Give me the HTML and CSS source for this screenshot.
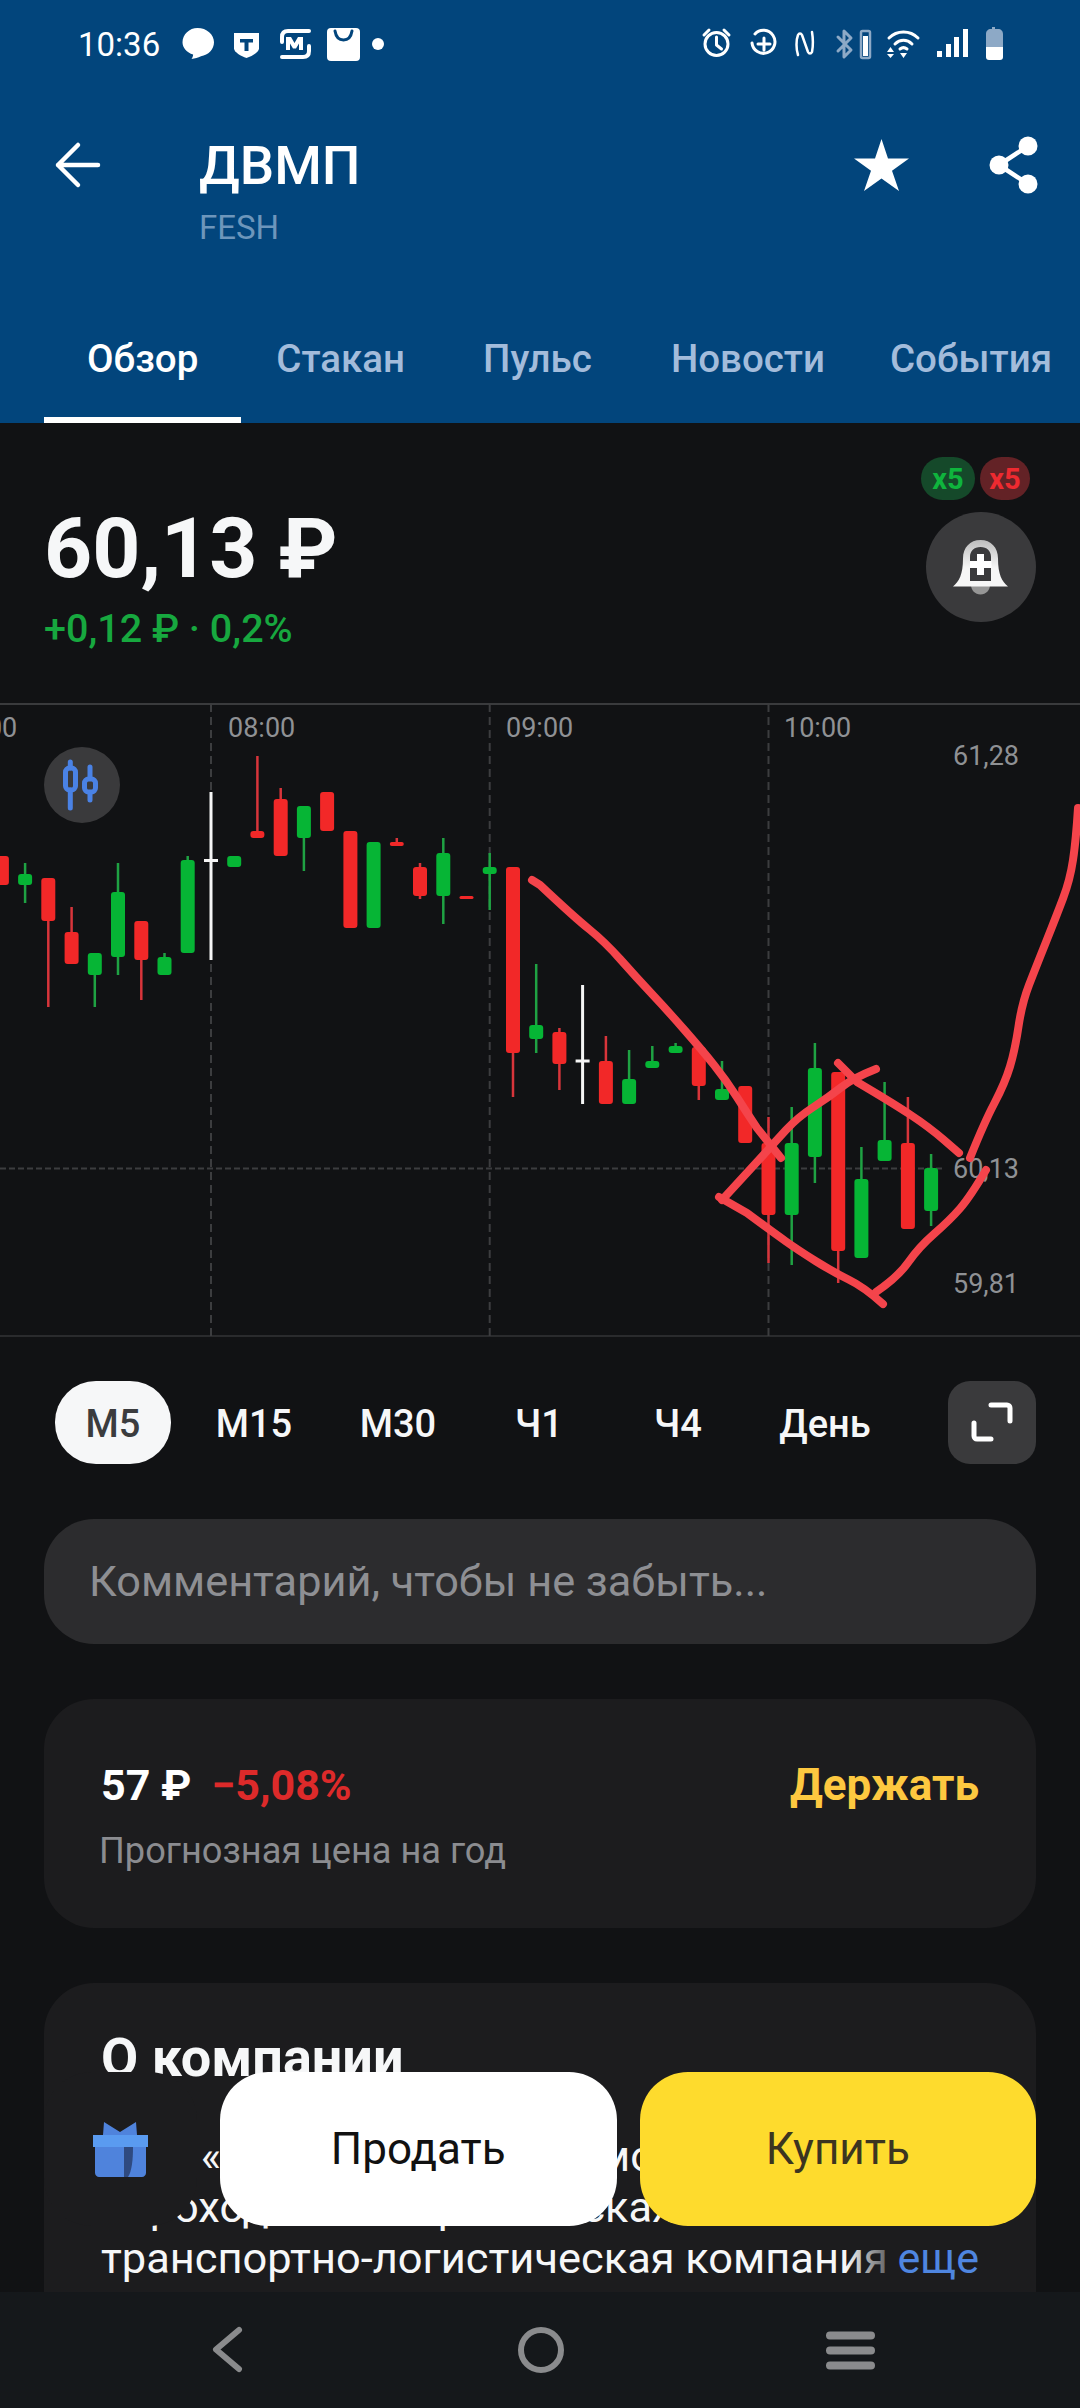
FILE: index.html
```html
<!DOCTYPE html>
<html lang="ru">
<head>
  <meta charset="UTF-8">
  <meta name="viewport" content="width=device-width, initial-scale=1.0">
  <title>ДВМП</title>
  <link rel="stylesheet" href="styles.css">
</head>
<body>
  <div id="screen">
    <header class="top">
      <div class="status">
        <div class="status-group">
          <span class="clock">10:36</span>
          <svg width="42" height="40" viewBox="173 24 42 40"><path class="fill" d="M198.500 28c9.100 0 16.500 6.300 16.500 14.300 0 7-5.600 12.800-13 14-3 1.300-6 2.200-9.500 2.700 1-1.300 1.600-2.800 1.600-4.400-6.300-2-10.600-6.700-10.600-12.300 0-8 6.900-14.300 15-14.300z"/></svg>
          <svg width="33" height="40" viewBox="227 24 33 40"><path class="fill" d="M235 33h25v15.500c0 3.500-7 7.700-12.500 9.500-5.500-1.800-12.500-6-12.500-9.500z"/><path class="cut" d="M241 39h13v3.500h-4.500V51h-4v-8.500H241z"/></svg>
          <svg width="40" height="40" viewBox="272 24 40 40"><path class="line thick" d="M283 42v-5c0-4 2-6 6-6h21M310 46v5c0 4-2 6-6 6h-21"/><path class="fill" d="M287 37h5l3.500 6 3.500-6h5v13h-4v-6.500l-3 5h-3l-3-5V50h-4z"/></svg>
          <svg width="37" height="40" viewBox="324 24 37 40"><rect class="fill" x="328" y="28" width="33" height="33" rx="4"/><path class="blue-line" d="M336 31c1 6 4 9 8.500 9s7.500-3 8.500-9"/></svg>
          <svg width="12" height="40" viewBox="373 24 12 40"><circle class="fill" cx="379" cy="44" r="6"/></svg>
        </div>
        <div class="status-group">
          <svg width="29" height="40" viewBox="702 24 29 40"><circle class="line" cx="716.500" cy="44" r="11.500"/><path class="line" d="M716.500 37v8l5 4M704 35l5-5M729 35l-5-5"/></svg>
          <svg width="30" height="40" viewBox="747 24 30 40"><path class="line" d="M755 34a11.500 11.500 0 1 1-3 9M764 38v12M758 44h12"/></svg>
          <svg width="20" height="40" viewBox="793 24 20 40"><path class="line thin" d="M798 55c-2-6-2-15 0-20 1-2 3-2 4 0l6 17c1 2 3 2 4 0 1-5 1-14 0-20"/></svg>
          <svg width="42" height="40" viewBox="829 24 42 40"><path class="line dim" d="M838 37l13 13-7 7V31l7 7-13 13"/><rect class="line thin dim" x="861" y="31" width="9" height="27" rx="1.500"/><rect class="fill" x="863" y="36" width="5" height="20"/></svg>
          <svg width="33" height="40" viewBox="887 24 33 40"><path class="line" d="M889 38c8-8 21-8 29 0M895 44c5-5 12-5 17 0M900 49c2.500-2 4.500-2 7 0"/><path class="fill" d="M887 52h7l-3.500-5zM887 54h7l-3.500 4zM900 53h7l-3.500 5z"/></svg>
          <svg width="32" height="40" viewBox="936 24 32 40"><path class="fill" d="M937 51h5v6h-5zM946 44h5v13h-5zM954 37h5v20h-5zM963 29h5v28h-5z"/></svg>
          <svg width="19" height="40" viewBox="984 24 19 40"><path class="dim-fill" d="M992 27h3v2h3c3 0 5 2 5 5v13h-17V34c0-3 2-5 5-5h1z"/><path class="fill" d="M986 47h17v10c0 2-1 3-3 3h-11c-2 0-3-1-3-3z"/></svg>
        </div>
      </div>
      <div class="app-bar">
        <svg class="back" width="47" height="45" viewBox="54 142 47 45"><path class="line arrow" d="M98 165H58M78 145l-20 20 20 20"/></svg>
        <div class="title-block">
          <h1>ДВМП</h1>
          <p>FESH</p>
        </div>
        <div class="actions">
          <svg width="55" height="52" viewBox="854 139 55 52"><path class="fill" d="M881.500 139l6.500 19.500h21l-17 12.200 7 20.300-17.500-12.500-17.500 12.500 7-20.300-17-12.200h21z"/></svg>
          <svg width="50" height="58" viewBox="989 136 50 58"><path class="line arrow" d="M1028 146l-29 19 29 19"/><circle class="fill" cx="1028" cy="146" r="9.500"/><circle class="fill" cx="999" cy="165" r="9.500"/><circle class="fill" cx="1028" cy="184" r="9.500"/></svg>
        </div>
      </div>
      <nav class="tabs">
        <a class="tab active">Обзор</a>
        <a class="tab">Стакан</a>
        <a class="tab">Пульс</a>
        <a class="tab">Новости</a>
        <a class="tab">События</a>
      </nav>
    </header>

    <section class="quote">
      <div>
        <div class="price">60,13 ₽</div>
        <div class="change">+0,12 ₽ · 0,2%</div>
      </div>
      <div class="quote-side">
        <div class="badges">
          <span class="badge long">x5</span>
          <span class="badge short">x5</span>
        </div>
        <button class="bell">
          <svg width="56" height="55" viewBox="953 541 56 55">
            <defs>
              <linearGradient id="bell-shade" x1="0" y1="0" x2="0" y2="1">
                <stop class="bell-top" offset="0"/>
                <stop class="bell-bottom" offset="0.6"/>
              </linearGradient>
            </defs>
            <path class="clapper" d="M971 586h19c0 5-4 9.500-9.500 9.500S971 591 971 586z"/>
            <path class="bell-body" fill-rule="evenodd" d="M953 587.500c6-5 10-12 10-28 0-11 7-18.500 17.500-18.500s17.500 7.500 17.500 18.500c0 16 4 23 10 28zM970 582h21v-24c0-6-4-10-10.500-10S970 552 970 558z"/>
            <path class="fill" d="M977 555h7v7h7.500v7H984v7h-7v-7h-7v-7h7z"/>
          </svg>
        </button>
      </div>
    </section>

    <section class="chart">
      <svg class="plot" width="1080" height="634" viewBox="0 703 1080 634">
        <path class="grid vertical" d="M211 704V1337M489.700 704V1337M768.500 704V1337"/>
        <path class="grid" d="M0 1168.500H942"/>
        <text class="axis" x="-50" y="737">07:00</text>
        <text class="axis" x="228" y="737">08:00</text>
        <text class="axis" x="506" y="737">09:00</text>
        <text class="axis" x="784" y="737">10:00</text>
        <text class="axis" x="953" y="765">61,28</text>
        <text class="axis" x="953" y="1178">60,13</text>
        <text class="axis" x="953" y="1293">59,81</text>

        <path class="wick red" d="M48.300 921V1007M71.600 907V932M141.300 960V1000M257.400 756V831M280.700 788V799M396.800 838V842M420 863V899M513 1053V1097M559.400 1028V1090M605.900 1036V1061M698.800 1086V1100M768.500 1117V1263M838.200 1251V1283M907.900 1097V1143"/>
        <path class="wick green" d="M25.100 863V903M94.800 975V1007M118 863V975M164.500 953V957M187.700 856V860M303.900 838V871M443.300 838V924M489.700 853V910M536.200 964V1053M629.100 1050V1079M652.300 1046V1061M675.600 1043V1046M722 1061V1089M791.700 1107V1265M814.900 1043V1183M861.400 1147V1179M884.600 1082V1140M931.100 1154V1226"/>
        <path class="wick white" d="M211 792V960M204 860.500H218M582.600 985V1104M575.600 1061H589.600"/>
        <g class="bodies red">
          <rect x="-5.100" y="856" width="14" height="29" rx="3"/>
          <rect x="41.300" y="878" width="14" height="43" rx="3"/>
          <rect x="64.600" y="932" width="14" height="32" rx="3"/>
          <rect x="134.300" y="921" width="14" height="39" rx="3"/>
          <rect x="250.400" y="831" width="14" height="7" rx="3"/>
          <rect x="273.700" y="799" width="14" height="57" rx="3"/>
          <rect x="320.100" y="792" width="14" height="39" rx="3"/>
          <rect x="343.400" y="831" width="14" height="97" rx="3"/>
          <rect x="389.800" y="842" width="14" height="4" rx="2"/>
          <rect x="413" y="867" width="14" height="29" rx="3"/>
          <rect x="459.500" y="896" width="14" height="3" rx="1.500"/>
          <rect x="506" y="867" width="14" height="186" rx="3"/>
          <rect x="552.400" y="1032" width="14" height="32" rx="3"/>
          <rect x="598.900" y="1061" width="14" height="43" rx="3"/>
          <rect x="691.800" y="1047" width="14" height="39" rx="3"/>
          <rect x="738.200" y="1086" width="14" height="57" rx="3"/>
          <rect x="761.500" y="1143" width="14" height="72" rx="3"/>
          <rect x="831.200" y="1072" width="14" height="179" rx="3"/>
          <rect x="900.900" y="1143" width="14" height="86" rx="3"/>
        </g>
        <g class="bodies green">
          <rect x="18.100" y="874" width="14" height="11" rx="3"/>
          <rect x="87.800" y="953" width="14" height="22" rx="3"/>
          <rect x="111" y="892" width="14" height="65" rx="3"/>
          <rect x="157.500" y="957" width="14" height="18" rx="3"/>
          <rect x="180.700" y="860" width="14" height="93" rx="3"/>
          <rect x="227.200" y="856" width="14" height="11" rx="3"/>
          <rect x="296.900" y="806" width="14" height="32" rx="3"/>
          <rect x="366.600" y="842" width="14" height="86" rx="3"/>
          <rect x="436.300" y="853" width="14" height="43" rx="3"/>
          <rect x="482.700" y="867" width="14" height="7" rx="3"/>
          <rect x="529.200" y="1025" width="14" height="14" rx="3"/>
          <rect x="622.100" y="1079" width="14" height="25" rx="3"/>
          <rect x="645.300" y="1061" width="14" height="7" rx="3"/>
          <rect x="668.600" y="1046" width="14" height="7" rx="3"/>
          <rect x="715" y="1089" width="14" height="11" rx="3"/>
          <rect x="784.700" y="1143" width="14" height="72" rx="3"/>
          <rect x="807.900" y="1068" width="14" height="89" rx="3"/>
          <rect x="854.400" y="1179" width="14" height="79" rx="3"/>
          <rect x="877.600" y="1140" width="14" height="21" rx="3"/>
          <rect x="924.100" y="1168" width="14" height="43" rx="3"/>
        </g>

        <g class="drawing">
          <path d="M532 880L540 885Q574 917 589.500 929.500Q605 942 620.500 959.500Q636 977 651.500 993.500Q667 1010 684.500 1030Q702 1050 714 1065Q726 1080 736.500 1096.500Q747 1113 757 1128L781 1158"/>
          <path d="M876 1069Q853 1078 841 1087.500Q829 1097 813.500 1107Q798 1117 786 1130Q774 1143 762 1156.500L722 1200"/>
          <path d="M719 1197L747 1213Q774 1233 786 1241.500Q798 1250 815.500 1261Q833 1272 848.500 1279.500Q864 1287 883 1304"/>
          <path d="M838 1063L857 1082Q891 1102 910 1114.500Q929 1127 944 1140L959 1153"/>
          <path d="M876 1292Q898 1277 908.500 1262Q919 1247 934.500 1233.500Q950 1220 960 1208.500Q970 1197 986 1170"/>
          <path d="M970 1158Q984 1123 994.500 1103Q1005 1083 1010 1066.500Q1015 1050 1018.500 1026.500Q1022 1003 1029 985Q1036 967 1046 942Q1056 917 1063 898.500Q1070 880 1073 860Q1076 840 1078 808"/>
        </g>
      </svg>
      <div class="chart-btn">
        <svg width="44" height="48" viewBox="63 763 44 48"><path class="blue-line" d="M73.300 764V770M73.300 792V810M93 769V780M93 795V802"/><rect class="blue-line" x="68.500" y="770" width="10" height="22" rx="4"/><rect class="blue-line" x="87.500" y="781" width="11" height="13" rx="4"/></svg>
      </div>
    </section>

    <div class="frames">
      <div class="frame-list">
        <span class="frame selected">М5</span>
        <span class="frame">М15</span>
        <span class="frame">М30</span>
        <span class="frame">Ч1</span>
        <span class="frame">Ч4</span>
        <span class="frame">День</span>
      </div>
      <button class="expand">
        <svg width="42" height="42" viewBox="972 1403 42 42"><path class="line expand-line" d="M992 1406h16a3 3 0 0 1 3 3v13M975 1424v13a3 3 0 0 0 3 3h14"/></svg>
      </button>
    </div>

    <div class="comment">Комментарий, чтобы не забыть...</div>

    <section class="card forecast">
      <div class="forecast-main">
        <div><b class="target">57 ₽</b><b class="delta">−5,08%</b></div>
        <b class="verdict">Держать</b>
      </div>
      <p class="forecast-note">Прогнозная цена на год</p>
    </section>

    <section class="card about">
      <h2>О компании</h2>
      <p class="about-text">ПАО «Дальневосточное морское<br>пароходство» — российская частная<br>транспортно-логистическая компания</p>
      <a class="more">еще</a>
    </section>

    <div class="trade">
      <div class="gift">
        <svg width="55" height="55" viewBox="93 2122 55 55">
          <path class="gift-bow" d="M104 2122l16 10 16-10 1 13h-34z"/>
          <rect class="gift-lid" x="93" y="2135" width="55" height="12"/>
          <path class="gift-bow" d="M95 2147h51v26c0 2-2 4-4 4H99c-2 0-4-2-4-4z"/>
          <path class="gift-band" d="M113 2147h11v30h-11z"/>
          <path class="gift-band dark" d="M124 2147h9c0 12-1 24-5 30h-4z"/>
        </svg>
      </div>
      <button class="trade-btn sell">Продать</button>
      <button class="trade-btn buy">Купить</button>
    </div>

    <footer class="nav">
      <svg width="30" height="46" viewBox="212 2328 30 46"><path class="nav-line" d="M239 2331l-23 19.500 23 19.500"/></svg>
      <svg class="nav-home" width="48" height="48" viewBox="517 2326 48 48"><circle class="nav-line" cx="541" cy="2350" r="20"/></svg>
      <svg width="50" height="46" viewBox="826 2328 50 46"><path class="nav-line flat" d="M830 2336.500h41M830 2351.500h41M830 2366.500h41"/></svg>
    </footer>
  </div>
</body>
</html>
```

FILE: styles.css
```css
* {
  box-sizing: border-box;
}

html, body {
  margin: 0;
  padding: 0;
  background: #111214;
}

#screen {
  position: relative;
  width: 1080px;
  height: 2408px;
  overflow: hidden;
  background: #111214;
  color: #f6f7f8;
  font-family: Roboto, "Noto Sans", sans-serif;
}

svg {
  display: block;
  overflow: visible;
}

button {
  padding: 0;
  border: none;
  font-family: inherit;
}

/* shared icon paints */
.fill {
  fill: #fff;
}

.cut {
  fill: #02457c;
}

.dim-fill {
  fill: #8da9c6;
}

.line {
  fill: none;
  stroke: #fff;
  stroke-width: 3;
  stroke-linecap: round;
  stroke-linejoin: round;
}

.line.thick {
  stroke-width: 4;
}

.line.thin {
  stroke-width: 2.5;
}

.line.dim {
  stroke: #8da9c6;
}

.line.arrow {
  stroke-width: 4.500;
}

.blue-line {
  fill: none;
  stroke: #02457c;
  stroke-width: 3;
  stroke-linecap: round;
}

/* header */
.top {
  display: flex;
  flex-direction: column;
  height: 423px;
  background: #02457c;
}

.status {
  display: flex;
  justify-content: space-between;
  align-items: center;
  height: 88px;
  padding: 0 77px 0 78px;
}

.status-group {
  display: flex;
  align-items: center;
  gap: 12px;
}

.status-group:last-child {
  gap: 16px;
}

.clock {
  font-size: 33px;
  color: #fff;
}

.app-bar {
  display: flex;
  align-items: flex-start;
  padding: 45px 41px 0 54px;
}

.back {
  margin: 9px 98px 0 0;
}

.title-block h1 {
  margin: 0;
  font-size: 54.500px;
  line-height: 64px;
  font-weight: 500;
  color: #fff;
}

.title-block p {
  margin: 11px 0 0;
  font-size: 33px;
  line-height: 40px;
  color: #6d96bb;
}

.actions {
  display: flex;
  align-items: center;
  gap: 80px;
  margin: 3px 0 0 auto;
}

.tabs {
  display: flex;
  margin-top: auto;
  padding-left: 44px;
}

.tab {
  height: 110px;
  padding: 24px 39px 0;
  font-size: 38.500px;
  line-height: 44px;
  font-weight: 500;
  color: #a3bcdb;
}

.tab.active {
  padding: 24px 43px 0;
  color: #fff;
  border-bottom: 6px solid #fff;
}

.tab:nth-child(2) {
  padding-left: 35px;
}

.tab:nth-child(4) {
  padding-left: 40px;
}

.tab:last-child {
  padding-left: 26px;
}

/* price block */
.quote {
  display: flex;
  justify-content: space-between;
  height: 280px;
  padding: 34px 44px 0 44px;
}

.price {
  margin-top: 43px;
  font-size: 84px;
  line-height: 98px;
  font-weight: 700;
  color: #f6f7f8;
}

.change {
  margin-top: 8px;
  font-size: 39.500px;
  line-height: 46px;
  font-weight: 500;
  color: #17a83f;
}

.quote-side {
  display: flex;
  flex-direction: column;
  align-items: center;
  gap: 12px;
}

.badges {
  display: flex;
  gap: 5px;
  align-self: flex-start;
  margin-left: -5px;
}

.badge {
  display: flex;
  align-items: center;
  justify-content: center;
  height: 43px;
  border-radius: 22px;
  font-size: 29px;
  font-weight: 700;
}

.badge.long {
  width: 54px;
  background: #15492a;
  color: #0fb43d;
}

.badge.short {
  width: 50px;
  background: #632226;
  color: #ee2a30;
}

.bell {
  display: flex;
  align-items: center;
  justify-content: center;
  width: 110px;
  height: 110px;
  border-radius: 50%;
  background: #3a3a3c;
}

.bell-body {
  fill: url(#bell-shade);
}

.bell-top {
  stop-color: #bdbdbd;
}

.bell-bottom {
  stop-color: #f6f6f6;
}

.clapper {
  fill: #969696;
}

/* chart */
.chart {
  position: relative;
  height: 634px;
  border-top: 2px solid #3a3b3d;
  border-bottom: 2px solid #2a2b2d;
}

.plot {
  position: absolute;
  top: -2px;
  left: 0;
}

.grid {
  fill: none;
  stroke: #3c3d3f;
  stroke-width: 2;
  stroke-dasharray: 6 3;
}

.grid.vertical {
  stroke-dasharray: 8 5;
}

.axis {
  font-size: 27px;
  fill: #8f9194;
}

.wick {
  fill: none;
  stroke-width: 2.5;
}

.wick.red {
  stroke: #d8353b;
}

.wick.green {
  stroke: #1fa243;
}

.wick.white {
  stroke: #f5f5f5;
  stroke-width: 3;
}

.bodies.red {
  fill: #f22828;
}

.bodies.green {
  fill: #06b535;
}

.drawing path {
  fill: none;
  stroke: #f4444b;
  stroke-width: 8;
  stroke-linecap: round;
  stroke-linejoin: round;
}

.chart-btn {
  position: absolute;
  top: 42px;
  left: 44px;
  display: flex;
  align-items: center;
  justify-content: center;
  width: 76px;
  height: 76px;
  border-radius: 50%;
  background: #3a3a3c;
}

.chart-btn .blue-line {
  stroke: #4a82e5;
  stroke-width: 5;
}

/* period switcher */
.frames {
  display: flex;
  align-items: center;
  justify-content: space-between;
  margin-top: 44px;
  padding: 0 44px 0 42px;
}

.frame-list {
  display: grid;
  grid-template-columns: 142px 140px 148px 134px 144px 150px;
}

.frame {
  justify-self: center;
  display: flex;
  align-items: center;
  justify-content: center;
  height: 83px;
  padding-top: 3px;
  font-size: 38px;
  font-weight: 500;
  color: #f6f7f8;
}

.frame.selected {
  width: 116px;
  border-radius: 41px;
  background: #f6f7f8;
  color: #3b3c3e;
}

.expand {
  display: flex;
  align-items: center;
  justify-content: center;
  width: 88px;
  height: 83px;
  border-radius: 22px;
  background: #3a3a3c;
}

.expand-line {
  stroke-width: 5;
}

/* comment field */
.comment {
  display: flex;
  align-items: center;
  height: 125px;
  margin: 55px 44px 0;
  padding: 0 45px;
  border-radius: 50px;
  background: #2c2c2e;
  font-size: 43.300px;
  color: #8e8f93;
}

/* cards */
.card {
  margin: 55px 44px 0;
  padding: 0 57px;
  border-radius: 50px;
  background: #1c1c1e;
}

.forecast {
  height: 229px;
  padding-top: 60px;
}

.forecast-main {
  display: flex;
  align-items: center;
  justify-content: space-between;
}

.target {
  font-size: 43px;
  font-weight: 700;
  color: #fff;
}

.delta {
  margin-left: 20px;
  font-size: 43px;
  font-weight: 700;
  color: #dd2a2a;
}

.verdict {
  font-size: 44px;
  font-weight: 700;
  color: #fdc840;
}

.forecast-note {
  margin: 18px 0 0 -2px;
  font-size: 36.200px;
  color: #8b8c90;
}

.about {
  position: relative;
  height: 400px;
  padding-top: 43px;
}

.about h2 {
  margin: 0;
  font-size: 54px;
  line-height: 64px;
  font-weight: 700;
  color: #f6f7f8;
}

.about-text {
  margin: 41px 0 0;
  font-size: 43.400px;
  line-height: 51px;
  white-space: nowrap;
  color: #f6f7f8;
}

.more {
  position: absolute;
  top: 250px;
  right: 0;
  padding: 0 57px 0 52px;
  background: linear-gradient(90deg, rgba(28, 28, 30, 0), #1c1c1e 32%);
  font-size: 43px;
  line-height: 51px;
  color: #4f86e0;
}

/* floating buy / sell bar */
.trade {
  position: absolute;
  top: 2072px;
  left: 44px;
  display: flex;
  width: 992px;
  height: 154px;
  gap: 23px;
}

.gift {
  display: flex;
  justify-content: flex-start;
  width: 153px;
  padding: 50px 0 0 49px;
  border-radius: 48px;
  background: #1c1c1e;
}

.gift-bow {
  fill: #4f83dc;
}

.gift-lid {
  fill: #5a9bf0;
}

.gift-band {
  fill: #4f83dc;
}

.gift-band.dark {
  fill: #2f4a80;
}

.trade-btn {
  flex: 1;
  border-radius: 48px;
  font-size: 44px;
}

.sell {
  background: #fff;
  color: #111;
}

.buy {
  background: #fedb2d;
  color: #3c3520;
}

/* system nav */
.nav {
  position: absolute;
  bottom: 0;
  left: 0;
  display: flex;
  align-items: center;
  justify-content: space-between;
  width: 1080px;
  height: 116px;
  padding: 0 204px 0 212px;
  background: #15181b;
}

.nav-home {
  margin-left: 14px;
}

.nav-line {
  fill: none;
  stroke: #8a8b8d;
  stroke-width: 6;
  stroke-linecap: round;
  stroke-linejoin: round;
}

.nav-line.flat {
  stroke-width: 8;
}
```
